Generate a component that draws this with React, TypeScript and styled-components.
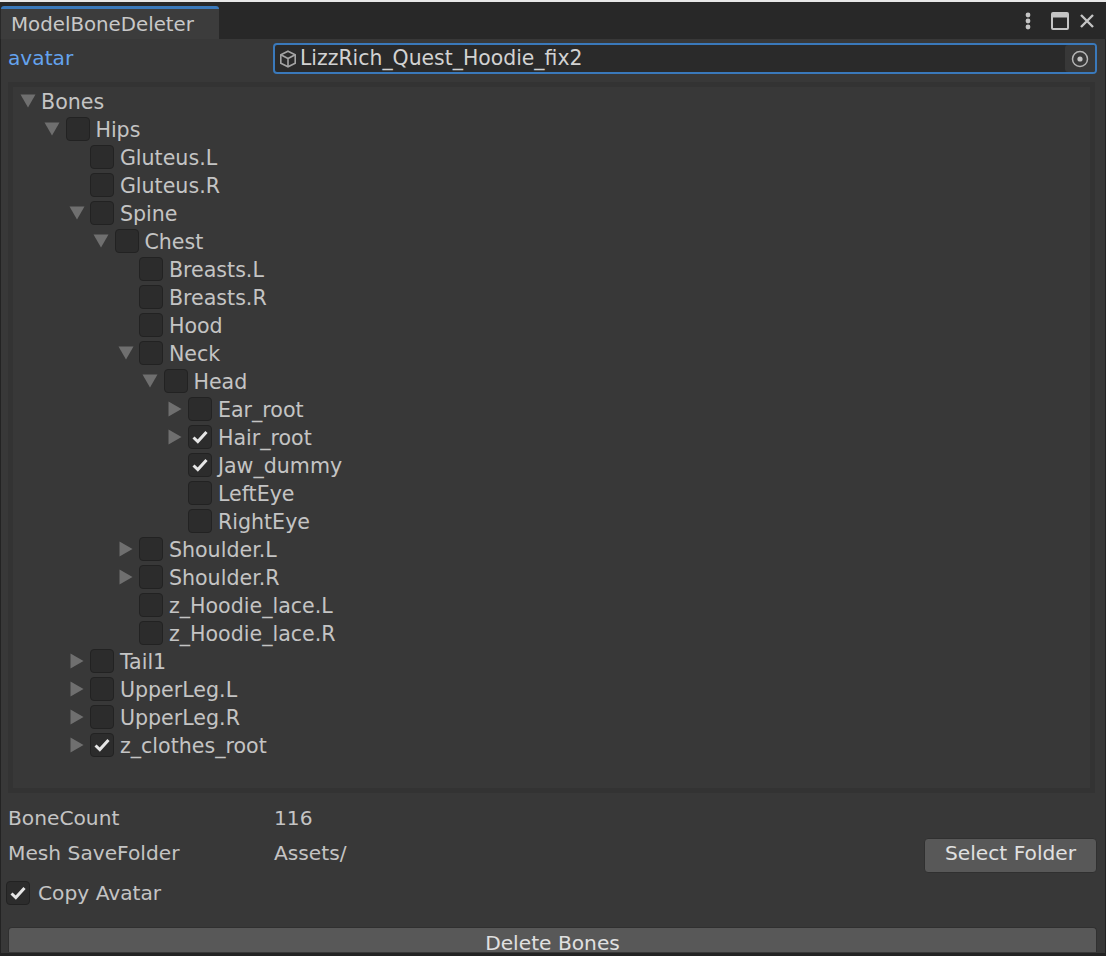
import styled, { createGlobalStyle } from 'styled-components'

const Global = createGlobalStyle`
  html, body {
    margin: 0;
    padding: 0;
    background: #383838;
    overflow: hidden;
  }
`

const Window = styled.div`
  width: 1106px;
  height: 956px;
  display: flex;
  flex-direction: column;
  overflow: hidden;
  background: #383838;
  color: #c4c4c4;
  font-family: 'DejaVu Sans', Verdana, sans-serif;
  font-size: 20.2px;
  border-top: 2px solid #e8e8e8;
  box-sizing: border-box;
`

const TabBar = styled.div`
  height: 37px;
  flex: none;
  display: flex;
  align-items: stretch;
  justify-content: space-between;
  background: #282828;
  padding-left: 1px;
`

const Tab = styled.div`
  width: 218px;
  margin-top: 4px;
  padding-left: 10px;
  box-sizing: border-box;
  display: flex;
  align-items: center;
  background: #3c3c3c;
  border-top: 3px solid #3a79bb;
  border-top-left-radius: 3px;
  border-top-right-radius: 3px;
  font-size: 19.8px;
  color: #c8c8c8;
`

const WindowButtons = styled.div`
  display: flex;
  align-items: center;
  gap: 11px;
  padding-right: 11px;
  padding-top: 1px;
  color: #c4c4c4;
`

const Content = styled.div`
  flex: 1;
  min-height: 0;
  display: flex;
  flex-direction: column;
  padding: 4px 9px 0 7px;
  border-left: 1px solid #232323;
  border-right: 1px solid #232323;
`

const AvatarRow = styled.div`
  display: flex;
  align-items: center;
  height: 31px;
  flex: none;
`

const FieldLabel = styled.div<{ $active?: boolean }>`
  width: 266px;
  flex: none;
  color: ${p => (p.$active ? '#64a3ee' : '#c4c4c4')};
  margin-bottom: ${p => (p.$active ? 2 : 0)}px;
`

const ObjectField = styled.div`
  flex: 1;
  height: 31px;
  box-sizing: border-box;
  display: flex;
  align-items: center;
  padding-left: 4px;
  gap: 3px;
  background: #2a2a2a;
  border: 2px solid #3a79bb;
  border-radius: 4px;
  color: #d2d2d2;
  margin: 0 -1px 0 -1px;
  overflow: hidden;
`

const ObjectName = styled.span`
  flex: 1;
  font-size: 20.4px;
  margin-bottom: 2px;
`

const Picker = styled.div`
  width: 30px;
  align-self: stretch;
  display: flex;
  align-items: center;
  justify-content: center;
  background: #383838;
  border-top-left-radius: 3px;
  border-bottom-left-radius: 3px;
`

const Tree = styled.div`
  margin-top: 8px;
  height: 711px;
  flex: none;
  box-sizing: border-box;
  padding-top: 5px;
  border: 5px solid #333333;
  border-top-width: 0;
  border-bottom-width: 5px;
  box-shadow: inset 0 5px 0 #333333;
  margin-right: 1px;
  background: #383838;
  font-size: 20.6px;
`

const Row = styled.div<{ $level: number }>`
  height: 28px;
  display: flex;
  align-items: center;
  padding-left: ${p => 6.5 + p.$level * 24.5}px;
  white-space: nowrap;
`

const RowLabel = styled.span`
  margin-top: 2px;
`

const ArrowSlot = styled.div`
  width: 21.5px;
  flex: none;
  display: flex;
  align-items: center;
`

const Box = styled.div<{ $margin?: number }>`
  width: 24px;
  height: 24px;
  flex: none;
  box-sizing: border-box;
  display: flex;
  align-items: center;
  justify-content: center;
  background: #2c2c2c;
  border: 1px solid #222222;
  border-radius: 4px;
  margin-right: ${p => p.$margin ?? 5.9}px;
`

const InfoRow = styled.div<{ $height: number; $gap?: number }>`
  height: ${p => p.$height}px;
  flex: none;
  display: flex;
  align-items: center;
  margin-top: ${p => p.$gap ?? 0}px;
`

const CopyRow = styled.div`
  height: 46px;
  flex: none;
  display: flex;
  align-items: center;
  margin-left: -2px;
`

const Spacer = styled.div`
  flex: 1;
`

const Button = styled.div`
  height: 35px;
  box-sizing: border-box;
  display: flex;
  align-items: center;
  justify-content: center;
  background: #585858;
  border: 1px solid #303030;
  border-radius: 4px;
  color: #e0e0e0;
`

const FolderButton = styled(Button)`
  width: 173px;
  margin-right: -1px;
  margin-top: 4px;
  margin-bottom: -1px;
  padding-bottom: 4px;
`

// the window cuts this button off at its lower edge, so it has no bottom border
const DeleteButton = styled(Button)`
  margin-top: 11px;
  margin-right: -1px;
  flex: none;
  height: 25px;
  align-items: flex-start;
  padding-top: 6px;
  line-height: 18px;
  border-bottom: 0;
  border-bottom-left-radius: 0;
  border-bottom-right-radius: 0;
`

const BottomEdge = styled.div`
  height: 3px;
  flex: none;
  background: #232323;
`

const DownArrow = () => (
  <svg width="16" height="14" viewBox="0 0 16 14">
    <path d="M0.5 0.5H15.5L8 13.5Z" fill="#6f6f6f" />
  </svg>
)

const RightArrow = () => (
  <svg width="15" height="16" viewBox="0 0 15 16">
    <path d="M1.5 0.5L14.5 8L1.5 15.5Z" fill="#6f6f6f" />
  </svg>
)

const Check = () => (
  <svg width="16" height="14" viewBox="0 0 16 14">
    <path d="M1.5 7.5L5.8 11.5L14.5 2" fill="none" stroke="#e6e6e6" strokeWidth="3" />
  </svg>
)

type Bone = { name: string; level: number; arrow?: 'down' | 'right'; checked?: boolean }

const bones: Bone[] = [
  { name: 'Hips', level: 1, arrow: 'down' },
  { name: 'Gluteus.L', level: 2 },
  { name: 'Gluteus.R', level: 2 },
  { name: 'Spine', level: 2, arrow: 'down' },
  { name: 'Chest', level: 3, arrow: 'down' },
  { name: 'Breasts.L', level: 4 },
  { name: 'Breasts.R', level: 4 },
  { name: 'Hood', level: 4 },
  { name: 'Neck', level: 4, arrow: 'down' },
  { name: 'Head', level: 5, arrow: 'down' },
  { name: 'Ear_root', level: 6, arrow: 'right' },
  { name: 'Hair_root', level: 6, arrow: 'right', checked: true },
  { name: 'Jaw_dummy', level: 6, checked: true },
  { name: 'LeftEye', level: 6 },
  { name: 'RightEye', level: 6 },
  { name: 'Shoulder.L', level: 4, arrow: 'right' },
  { name: 'Shoulder.R', level: 4, arrow: 'right' },
  { name: 'z_Hoodie_lace.L', level: 4 },
  { name: 'z_Hoodie_lace.R', level: 4 },
  { name: 'Tail1', level: 2, arrow: 'right' },
  { name: 'UpperLeg.L', level: 2, arrow: 'right' },
  { name: 'UpperLeg.R', level: 2, arrow: 'right' },
  { name: 'z_clothes_root', level: 2, arrow: 'right', checked: true },
]

export default function App() {
  return (
    <Window>
      <Global />
      <TabBar>
        <Tab>ModelBoneDeleter</Tab>
        <WindowButtons>
          <svg width="16" height="18" viewBox="0 0 16 18">
            <circle cx="4" cy="3" r="2.4" fill="#c4c4c4" />
            <circle cx="4" cy="9" r="2.4" fill="#c4c4c4" />
            <circle cx="4" cy="15" r="2.4" fill="#c4c4c4" />
          </svg>
          <svg width="18" height="18" viewBox="0 0 18 18">
            <rect x="1" y="1" width="16" height="16" rx="1" fill="none" stroke="#c4c4c4" strokeWidth="2" />
            <rect x="1" y="1" width="16" height="4.5" fill="#c4c4c4" />
          </svg>
          <svg width="15" height="14" viewBox="0 0 15 14">
            <path d="M1 1L13 13M13 1L1 13" stroke="#c4c4c4" strokeWidth="2.4" />
          </svg>
        </WindowButtons>
      </TabBar>
      <Content>
        <AvatarRow>
          <FieldLabel $active>avatar</FieldLabel>
          <ObjectField>
            <svg width="18" height="18" viewBox="0 0 18 18" fill="none" stroke="#a4a4a4" strokeWidth="1.6">
              <path d="M9 1.2L16.2 4.8V13.2L9 16.8L1.8 13.2V4.8Z" />
              <path d="M1.8 4.8L9 8.5L16.2 4.8M9 8.5V16.8" />
            </svg>
            <ObjectName>LizzRich_Quest_Hoodie_fix2</ObjectName>
            <Picker>
              <svg width="18" height="18" viewBox="0 0 18 18">
                <circle cx="9" cy="9" r="7.5" fill="none" stroke="#b4b4b4" strokeWidth="1.5" />
                <circle cx="9" cy="9" r="2.6" fill="#c4c4c4" />
              </svg>
            </Picker>
          </ObjectField>
        </AvatarRow>
        <Tree>
          <Row $level={0}>
            <ArrowSlot><DownArrow /></ArrowSlot>
            <RowLabel>Bones</RowLabel>
          </Row>
          {bones.map(b => (
            <Row key={b.name} $level={b.level}>
              <ArrowSlot>
                {b.arrow === 'down' && <DownArrow />}
                {b.arrow === 'right' && <RightArrow />}
              </ArrowSlot>
              <Box>{b.checked && <Check />}</Box>
              <RowLabel>{b.name}</RowLabel>
            </Row>
          ))}
        </Tree>
        <InfoRow $height={35} $gap={7}>
          <FieldLabel>BoneCount</FieldLabel>
          116
        </InfoRow>
        <InfoRow $height={35}>
          <FieldLabel>Mesh SaveFolder</FieldLabel>
          Assets/
          <Spacer />
          <FolderButton>Select Folder</FolderButton>
        </InfoRow>
        <CopyRow>
          <Box $margin={8}><Check /></Box>
          Copy Avatar
        </CopyRow>
        <DeleteButton>Delete Bones</DeleteButton>
      </Content>
      <BottomEdge />
    </Window>
  )
}
